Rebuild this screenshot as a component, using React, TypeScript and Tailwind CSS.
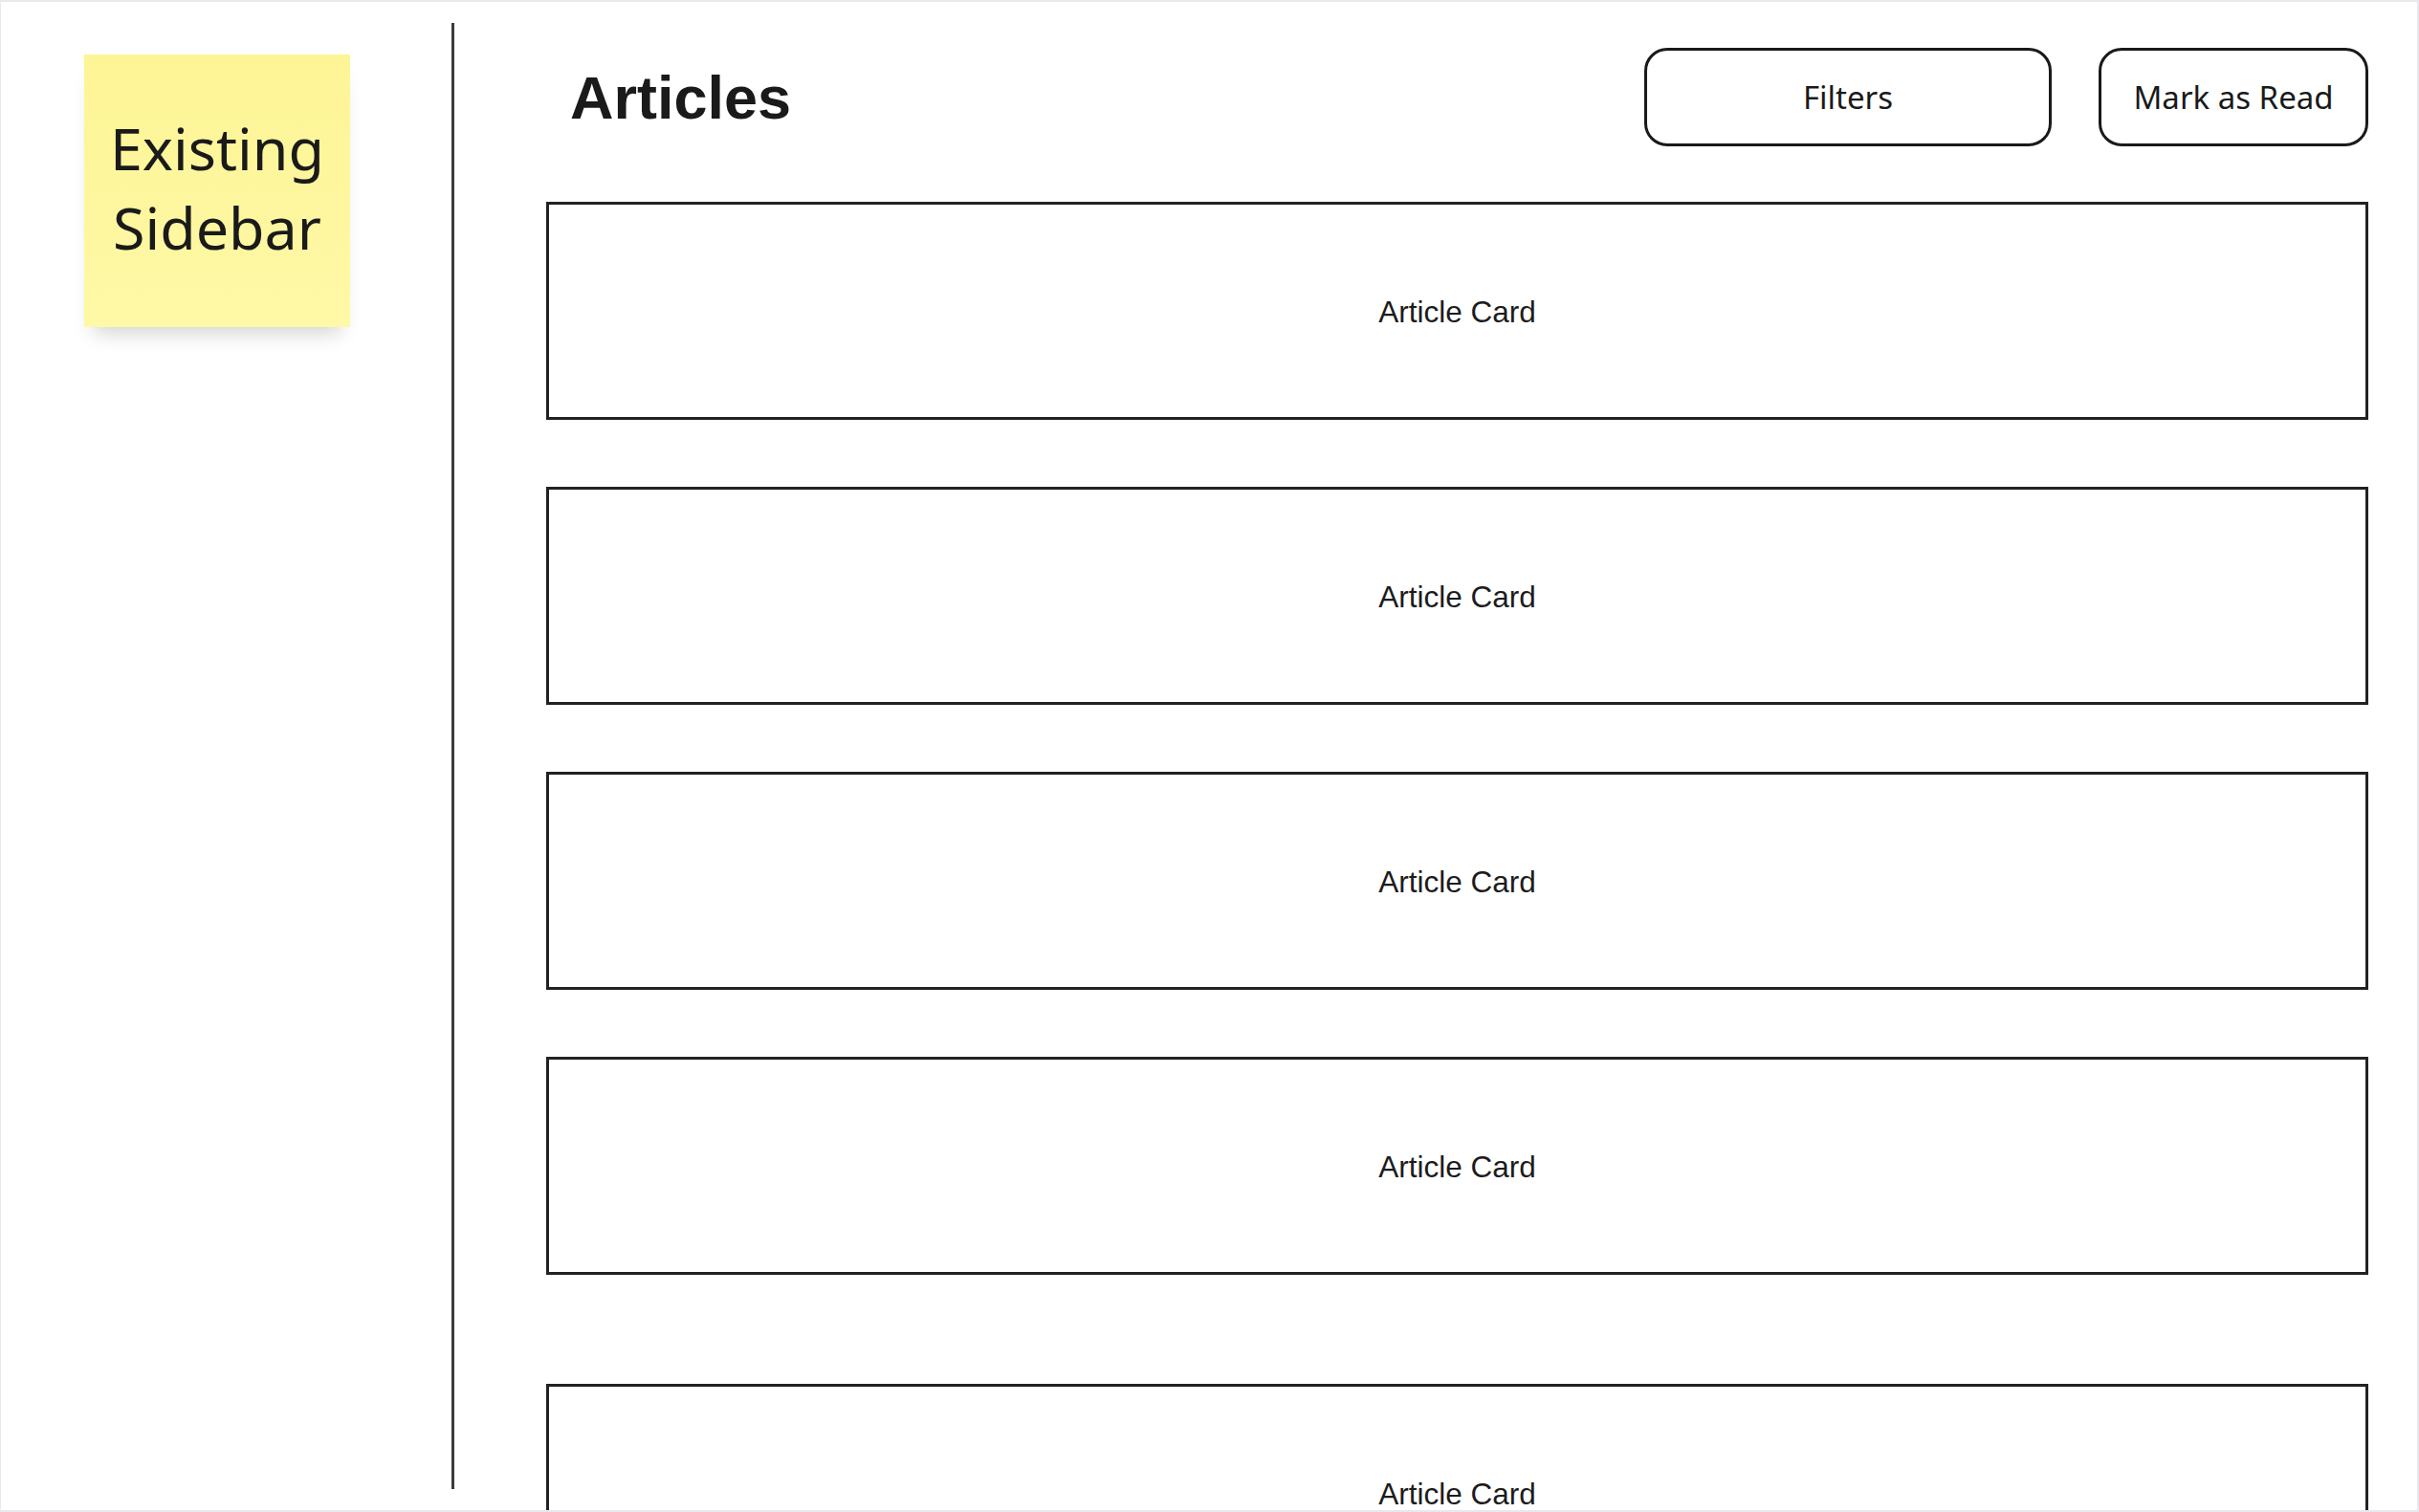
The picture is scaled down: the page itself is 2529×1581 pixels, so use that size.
import { FC } from 'react';

const cards = [0, 1, 2, 3];

const ArticleCard: FC<{ className?: string }> = ({ className = '' }) => (
  <div
    className={`h-[228px] shrink-0 border-[3px] border-[#222222] bg-white flex items-center justify-center pt-[3px] ${className}`}
  >
    <span className="text-[31.5px] text-[#1c1c1c] font-['Liberation_Sans',Arial,sans-serif]">
      Article Card
    </span>
  </div>
);

const App: FC = () => {
  return (
    <div className="h-[1581px] w-full overflow-hidden bg-white border-t-2 border-l border-r-2 border-b-2 border-[#e8e8ee] flex">
      {/* Sidebar placeholder */}
      <aside className="w-[471px] shrink-0 pl-[87px] pt-[55px]">
        <div className="w-[278px] h-[285px] bg-linear-to-b from-[#fdf595] to-[#fff8a6] shadow-[0_16px_20px_-10px_rgba(0,0,0,0.18)] flex items-center justify-center pb-[8px]">
          <p className="text-center text-[61px] leading-[83px] text-[#1a1a1a] font-['Noto_Sans',sans-serif]">
            Existing
            <br />
            Sidebar
          </p>
        </div>
      </aside>

      {/* Divider */}
      <div className="w-[3px] shrink-0 mt-[22px] h-[1533px] bg-[#3b3b3b]" />

      {/* Main */}
      <main className="ml-[96px] w-[1905px] shrink-0 pt-[48px] flex flex-col">
        <header className="h-[103px] shrink-0 flex items-center justify-between">
          <h1 className="pl-[25px] pt-[2px] text-[63px] font-bold leading-none text-[#1a1a1a] font-['Liberation_Sans',Arial,sans-serif]">
            Articles
          </h1>
          <div className="flex items-stretch gap-[49px] h-[103px]">
            <button className="w-[426px] rounded-[24px] border-[3px] border-[#1a1a1a] text-[33px] text-[#1a1a1a] font-['Noto_Sans',sans-serif]">
              Filters
            </button>
            <button className="w-[282px] rounded-[24px] border-[3px] border-[#1a1a1a] text-[33px] text-[#1a1a1a] font-['Noto_Sans',sans-serif]">
              Mark as Read
            </button>
          </div>
        </header>

        <div className="mt-[58px] shrink-0 flex flex-col gap-[70px]">
          {cards.map((i) => (
            <ArticleCard key={i} />
          ))}
          <ArticleCard className="mt-[44px]" />
        </div>
      </main>
    </div>
  );
};

export default App;
